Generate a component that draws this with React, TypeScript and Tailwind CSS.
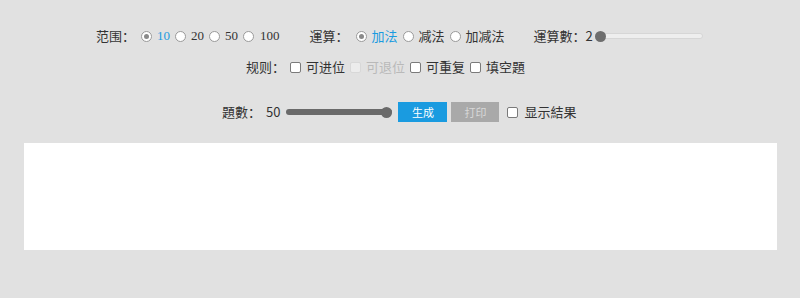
import React from "react";

const cjk = { fontFamily: '"Noto Sans CJK SC", "Noto Sans", sans-serif' };
const serif = { fontFamily: '"Liberation Serif", "Noto Sans CJK SC", serif' };

function Radio({ checked }: { checked?: boolean }) {
  return (
    <span className="inline-flex h-[11px] w-[11px] items-center justify-center rounded-full border border-[#9a9a9a] bg-white">
      {checked && <span className="h-[5px] w-[5px] rounded-full bg-[#8a8a8a]" />}
    </span>
  );
}

function Check({ disabled }: { disabled?: boolean }) {
  return (
    <span
      className={
        disabled
          ? "inline-block h-[11px] w-[11px] rounded-[2px] border border-[#d8d8d8] bg-[#ececec]"
          : "inline-block h-[11px] w-[11px] rounded-[2px] border border-[#7a7a7a] bg-white"
      }
    />
  );
}

export default function App() {
  return (
    <div className="h-[298px] w-[800px] bg-[#e1e1e1] text-[13px] text-[#333]" style={cjk}>
      <div className="h-[25px]" />
      {/* Row 1 */}
      <div className="flex h-[22px] items-center pl-[96px]">
        <span>范围：</span>
        <span className="ml-[6px] flex items-center"><Radio checked /></span>
        <span className="ml-[5px] text-[#1a9be0]" style={serif}>10</span>
        <span className="ml-[5px] flex items-center"><Radio /></span>
        <span className="ml-[5px]" style={serif}>20</span>
        <span className="ml-[5px] flex items-center"><Radio /></span>
        <span className="ml-[5px]" style={serif}>50</span>
        <span className="ml-[5px] flex items-center"><Radio /></span>
        <span className="ml-[6px]" style={serif}>100</span>
        <span className="ml-[30px]">運算：</span>
        <span className="ml-[7px] flex items-center"><Radio checked /></span>
        <span className="ml-[5px] text-[#1a9be0]">加法</span>
        <span className="ml-[5px] flex items-center"><Radio /></span>
        <span className="ml-[5px]">减法</span>
        <span className="ml-[5px] flex items-center"><Radio /></span>
        <span className="ml-[5px]">加减法</span>
        <span className="ml-[29px]">運算數：2</span>
        <div className="relative ml-[2px] flex h-[12px] w-[108px] items-center">
          <div className="h-[6px] w-full rounded-full border border-[#d6d6d6] bg-[#eeeeee]" />
          <div className="absolute left-0 top-[1px] h-[11px] w-[11px] rounded-full bg-[#6e6e6e]" />
        </div>
      </div>
      {/* Row 2 */}
      <div className="mt-[9px] flex h-[22px] items-center pl-[246px]">
        <span>规则：</span>
        <span className="ml-[5px] flex items-center"><Check /></span>
        <span className="ml-[5px]">可进位</span>
        <span className="ml-[5px] flex items-center"><Check disabled /></span>
        <span className="ml-[5px] text-[#b9b9b9]">可退位</span>
        <span className="ml-[5px] flex items-center"><Check /></span>
        <span className="ml-[5px]">可重复</span>
        <span className="ml-[5px] flex items-center"><Check /></span>
        <span className="ml-[5px]">填空題</span>
      </div>
      {/* Row 3 */}
      <div className="mt-[23px] flex h-[22px] items-center pl-[222px]">
        <span>題數：</span>
        <span className="ml-[5px]">50</span>
        <div className="relative ml-[6px] flex h-[12px] w-[106px] items-center">
          <div className="h-[6px] w-full rounded-full bg-[#6a6a6a]" />
          <div className="absolute right-0 top-[0.5px] h-[11px] w-[11px] rounded-full bg-[#6a6a6a]" />
        </div>
        <button className="ml-[6px] flex h-[20px] w-[49px] items-center justify-center bg-[#1a9be0] text-[11px] text-white">
          生成
        </button>
        <button className="ml-[4px] flex h-[20px] w-[48px] items-center justify-center bg-[#a9a9a9] text-[11px] text-[#d8d8d8]">
          打印
        </button>
        <span className="ml-[8px] flex items-center"><Check /></span>
        <span className="ml-[6px]">显示結果</span>
      </div>
      {/* Result box */}
      <div className="ml-[24px] mt-[20px] h-[107px] w-[753px] bg-white" />
    </div>
  );
}
